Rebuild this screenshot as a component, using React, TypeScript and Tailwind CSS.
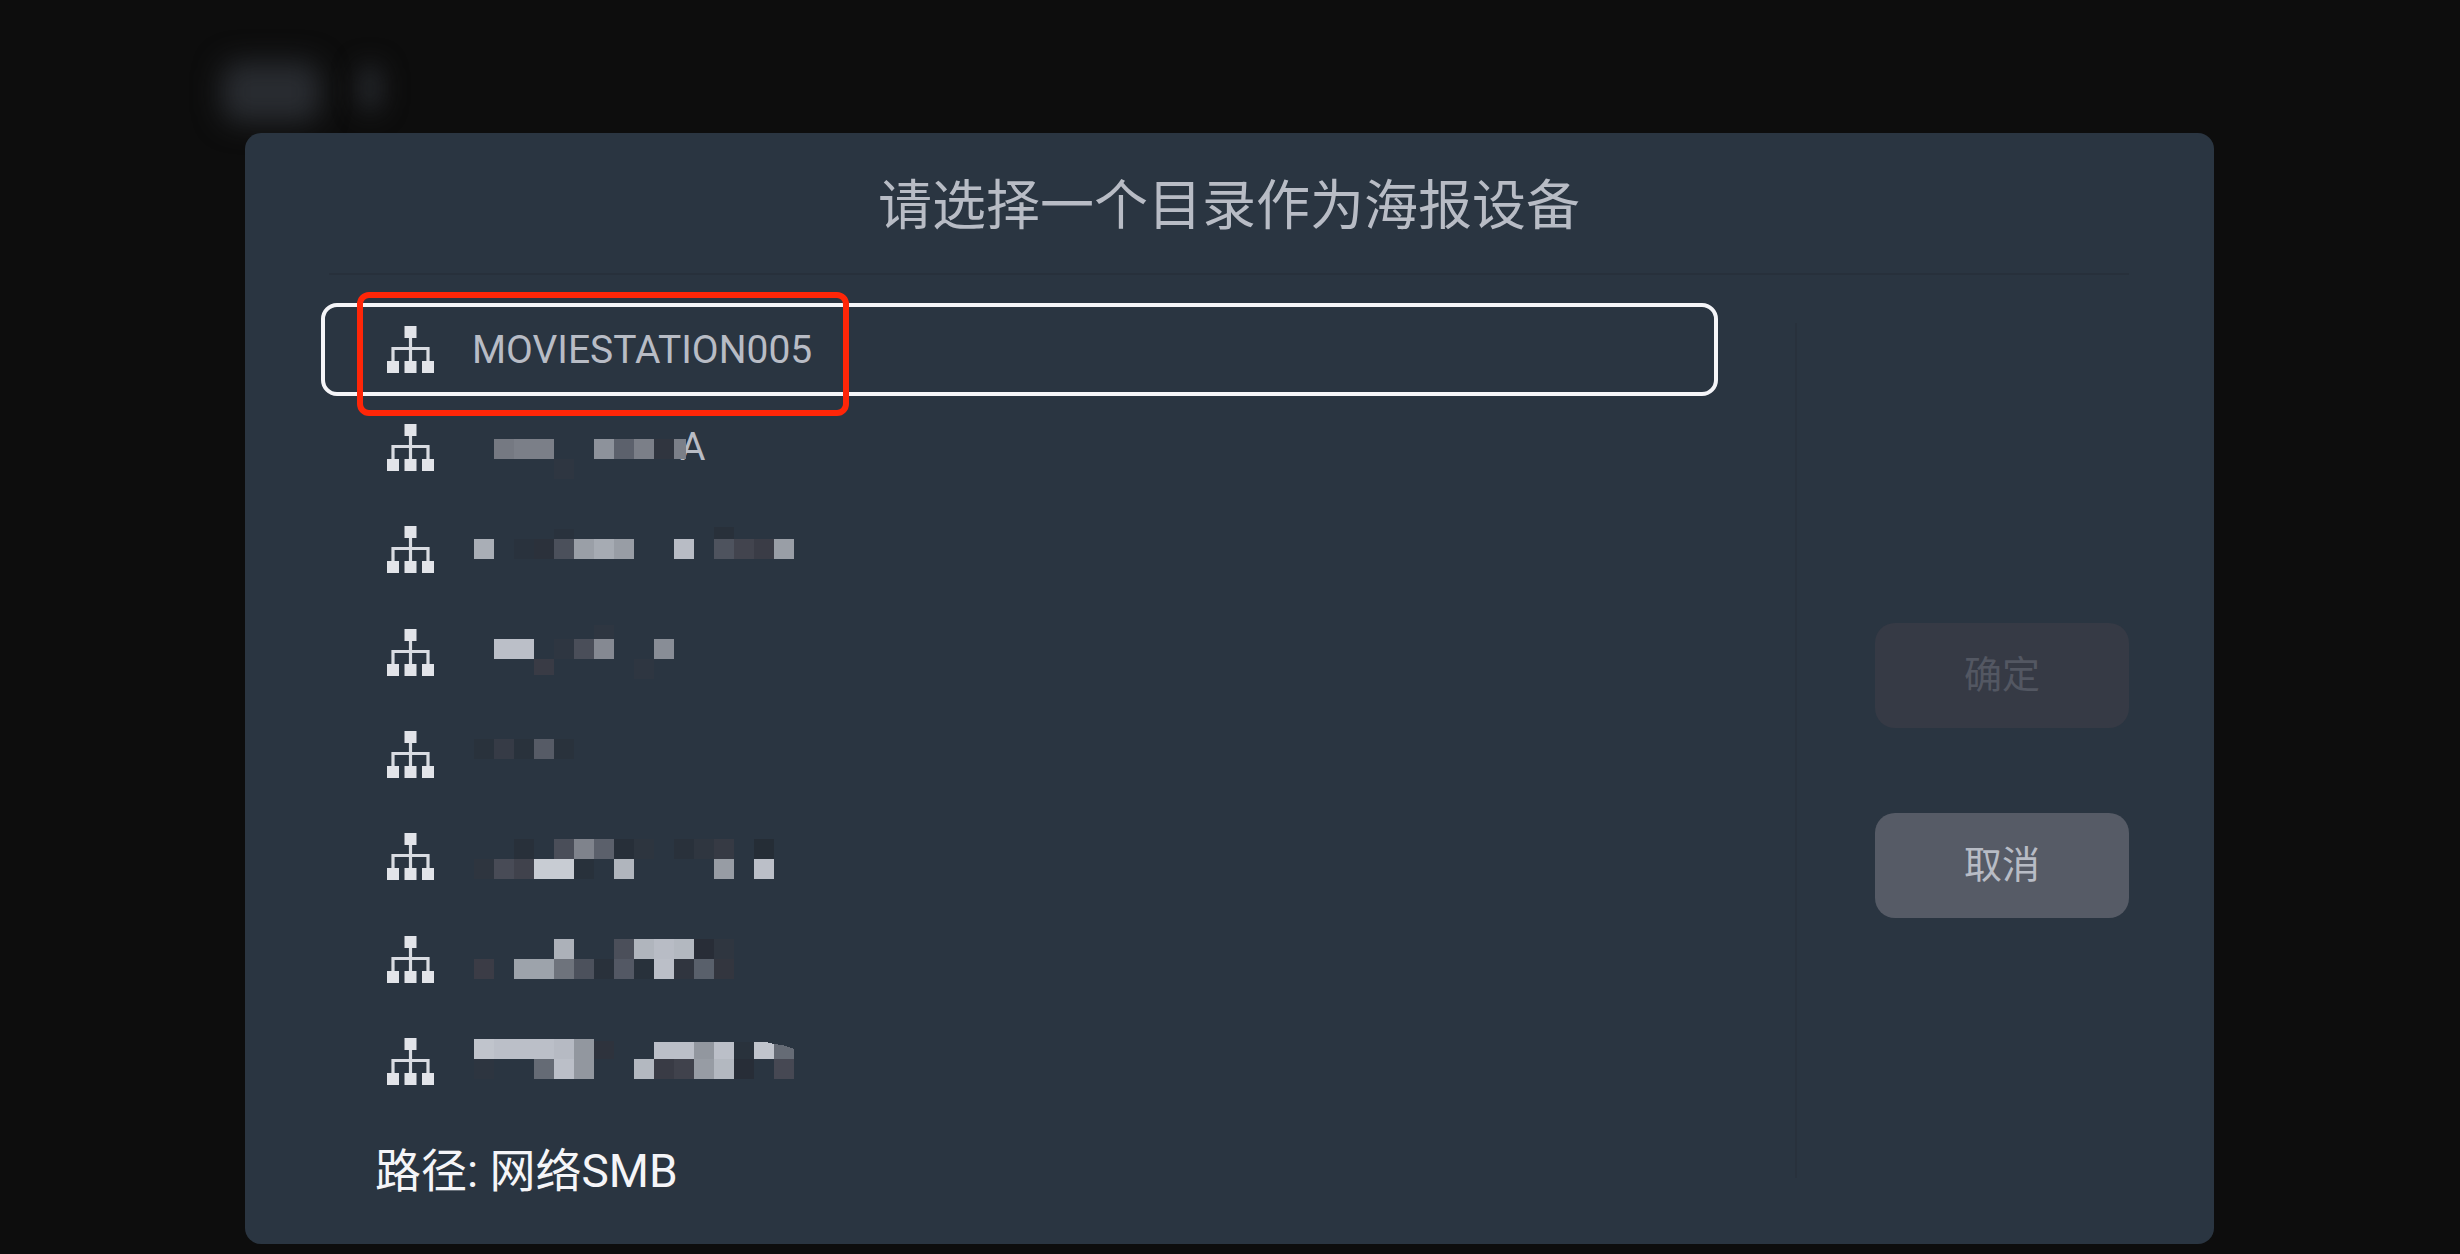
type Cell = [x: number, y: number, w: number, fill: string, h?: number];

// Device names the user has chosen to hide; one cell is 20px
const mosaic: Cell[] = [
  [20, 20, 20, "#757982"], [40, 20, 40, "#7b7f88"], [120, 20, 20, "#8d929b"], [140, 20, 20, "#5c616c"],
  [160, 20, 20, "#7b7f88"], [180, 20, 20, "#30353f"], [200, 20, 12, "#7b7f88"], [80, 40, 20, "#2e3641"],

  [0, 120, 20, "#a9aeb6"], [60, 120, 20, "#2b313b"], [80, 120, 20, "#4b505b"], [100, 120, 20, "#9a9fa7"],
  [120, 120, 20, "#a6abb3"], [140, 120, 20, "#989da5"], [200, 120, 20, "#b8bcc5"], [240, 120, 20, "#4e535e"],
  [260, 120, 20, "#42444e"], [280, 120, 20, "#3a3c46"], [300, 120, 20, "#999ea6"], [80, 110, 20, "#29323d", 10],
  [240, 108, 20, "#28303a", 12], [40, 120, 20, "#29323d"],

  [20, 220, 40, "#bbbfc8"], [80, 220, 20, "#2e3641"], [100, 220, 20, "#4a4e59"], [120, 220, 20, "#858992"],
  [180, 220, 20, "#888d96"], [60, 240, 20, "#393b45", 16], [120, 206, 20, "#2e3641", 14],
  [160, 240, 20, "#2e3641"],

  [0, 320, 20, "#29323c"], [20, 320, 20, "#363b46"], [40, 320, 20, "#29323c"], [60, 320, 20, "#565b66"],
  [80, 320, 20, "#29323c"],

  [40, 420, 20, "#28303a"], [80, 420, 20, "#4a4e59"], [100, 420, 20, "#7f838c"], [120, 420, 20, "#5b606b"],
  [140, 420, 20, "#272f39"], [160, 420, 20, "#2d353f"], [200, 420, 20, "#29313b"], [220, 420, 20, "#2f3640"],
  [240, 420, 20, "#363a44"], [280, 420, 20, "#252d36"], [0, 440, 20, "#2e353f"], [20, 440, 20, "#484b56"],
  [40, 440, 20, "#40424c"], [60, 440, 40, "#c8ccd3"], [100, 440, 20, "#28313b"], [140, 440, 20, "#b0b5bd"],
  [240, 440, 20, "#979ca4"], [280, 440, 20, "#bbbfc8"],

  [80, 520, 20, "#acb1b9"], [140, 520, 20, "#4b4f5a"], [160, 520, 20, "#b0b5bd"], [180, 520, 20, "#b8bcc5"],
  [200, 520, 20, "#b3b8c0"], [220, 520, 20, "#282d37"], [240, 520, 20, "#2f3640"], [0, 540, 20, "#3b3c46"],
  [40, 540, 40, "#9da3ab"], [80, 540, 20, "#6e737c"], [100, 540, 20, "#4c515c"], [120, 540, 20, "#29313b"],
  [140, 540, 20, "#535864"], [160, 540, 20, "#28313b"], [180, 540, 20, "#bbbfc8"], [200, 540, 20, "#30353f"],
  [220, 540, 20, "#59606b"], [240, 540, 20, "#33363f"],

  [0, 620, 20, "#c0c4cc"], [20, 620, 60, "#bbbfc8"], [80, 620, 20, "#b6bac3"], [100, 620, 20, "#92979f"],
  [120, 622, 20, "#2e333d", 18], [180, 623, 40, "#bbbfc8", 17], [220, 623, 20, "#92979f", 17],
  [240, 623, 20, "#bbbfc8", 17], [260, 623, 20, "#29323c", 17], [60, 640, 20, "#656b75"],
  [80, 640, 20, "#bbbfc8"], [100, 640, 20, "#92979f"], [0, 640, 20, "#2d3540"], [160, 640, 20, "#b3b8c0"],
  [180, 640, 20, "#393b45"], [200, 640, 20, "#40424c"], [220, 640, 20, "#979ca4"], [240, 640, 20, "#b3b8c0"],
  [260, 640, 20, "#272d37"], [300, 640, 20, "#464853"],
];

const devices = ["MOVIESTATION005", "A", "", "", "", "", "", ""];

const NetworkIcon = () => (
  <svg viewBox="0 0 47 47" className="h-[47px] w-[47px] shrink-0" aria-hidden="true">
    <path d="M23.5 8v30M6 38V22.500h35V38" fill="none" stroke="#d9dce2" strokeWidth="3.2" />
    <path d="M17.500 0h12v12h-12zM0 35h12v12H0zM17.500 35h12v12h-12zM35 35h12v12H35z" fill="#e2e4e9" />
  </svg>
);

const Mosaic = () => (
  <svg
    viewBox="0 0 330 680"
    className="pointer-events-none absolute top-[116px] left-[153px] h-[680px] w-[330px]"
    shapeRendering="crispEdges"
    aria-hidden="true"
  >
    {mosaic.map(([x, y, w, fill, h = 20]) => (
      <rect key={`${x}-${y}`} x={x} y={y} width={w} height={h} fill={fill} />
    ))}
    <path d="M280 623h12l8 2v15h-20z" fill="#c0c4cc" />
    <path d="M300 625q12 1 20 5v10h-20z" fill="#656b75" />
  </svg>
);

const App = () => {
  return (
    <main className="relative flex min-h-screen flex-col bg-[#0d0d0d] pt-[133px] pr-[246px] pb-[10px] pl-[245px] font-['Roboto','Noto_Sans_CJK_SC',sans-serif]">
      {/* Blurred heading behind the dialog */}
      <div className="absolute top-[62px] left-[222px] h-[60px] w-[98px] rounded-2xl bg-[#292c31] blur-[14px]" />
      <div className="absolute top-[64px] left-[358px] h-[48px] w-[24px] rounded-xl bg-[#24272b] blur-[12px]" />

      <section
        role="dialog"
        aria-labelledby="dialog-title"
        className="relative flex flex-1 flex-col rounded-2xl bg-[#2a3541] pr-[85px] pl-[76px]"
      >
        <h1
          id="dialog-title"
          className="ml-2 flex h-[142px] items-center justify-center border-b-2 border-[#27303b] pt-2 text-[54px] leading-[80px] text-[#b8bcc5]"
        >
          请选择一个目录作为海报设备
        </h1>

        <div className="flex flex-1">
          <div className="flex flex-1 flex-col pt-7">
            <div className="relative flex flex-1 flex-col">
              <ul className="flex flex-1 flex-col">
                {devices.map((name, i) => (
                  <li key={i} className={i === 0 ? "h-[93px]" : "min-h-[80px] flex-1"}>
                    <button
                      type="button"
                      aria-label={name || "设备"}
                      className={
                        i === 0
                          ? "flex h-full w-full items-center rounded-2xl border-4 border-[#f5f5f8] pl-[62px] text-left text-[39px] leading-[48px] text-[#b8bcc5]"
                          : "flex h-full w-full items-center pl-[66px] text-left text-[39px] leading-[48px] text-[#b8bcc5]"
                      }
                    >
                      <NetworkIcon />
                      <span className={i === 1 ? "ml-[246px]" : "ml-[38px]"}>{name}</span>
                    </button>
                  </li>
                ))}
              </ul>
              <Mosaic />
              <div className="pointer-events-none absolute -top-[11px] left-[36px] h-[124px] w-[492px] rounded-xl border-6 border-[#ff2608]" />
            </div>
            <p className="flex h-[131px] items-center pb-4 pl-[54px] text-[46px] leading-[64px] text-[#f5f5f8]">
              路径: 网络SMB
            </p>
          </div>

          <div className="mt-12 mr-[78px] mb-[66px] ml-[77px] w-[2px] bg-[#28313c]" />

          <div className="flex w-[254px] flex-col justify-center gap-[85px] pt-[22px]">
            <button
              type="button"
              disabled
              className="h-[105px] rounded-[20px] bg-[#363a45] text-[38px] text-[#535762]"
            >
              确定
            </button>
            <button type="button" className="h-[105px] rounded-[20px] bg-[#565b66] text-[38px] text-[#b8bcc5]">
              取消
            </button>
          </div>
        </div>
      </section>
    </main>
  );
};

export default App;
